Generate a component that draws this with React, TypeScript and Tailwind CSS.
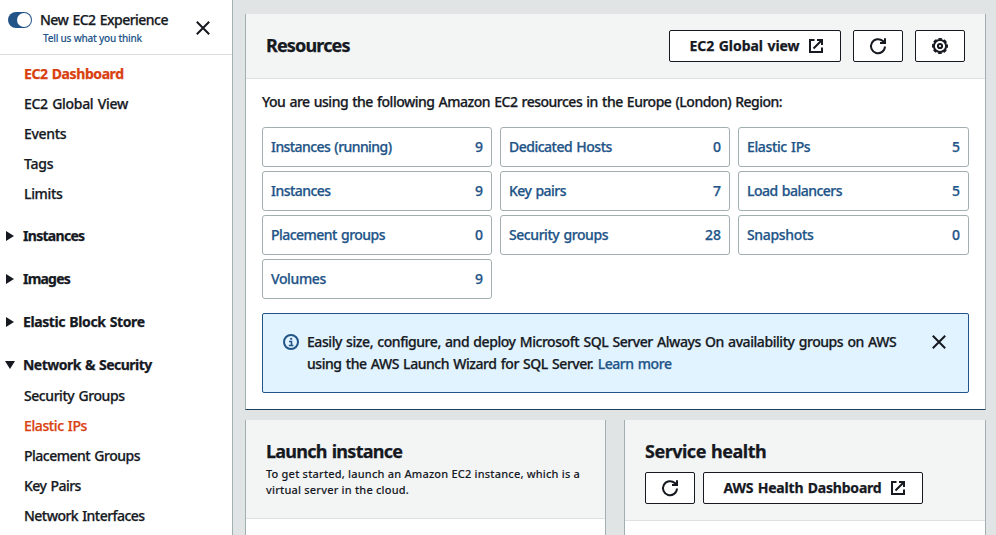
import React from 'react';

const ExternalIcon = () => (
  <svg width="16" height="16" viewBox="0 0 16 16" fill="none" stroke="#16191f" strokeWidth="2" className="shrink-0">
    <path d="M6.5 2H2v12h12V9.5" />
    <path d="M9 2h5v5M14 2L5.500 10.500" />
  </svg>
);

const RefreshIcon = () => (
  <svg width="18" height="18" viewBox="0 0 18 18" fill="none" stroke="#16191f" strokeWidth="2">
    <path d="M16 9.500A7 7 0 1 1 13.800 4.100L15 5.300" />
    <path d="M16 1.200V6h-5" />
    <path d="M13 4l3-1v3z" fill="#16191f" stroke="none" />
  </svg>
);

const GearIcon = () => (
  <svg width="18" height="18" viewBox="0 0 18 18" fill="none" stroke="#16191f">
    <circle cx="9" cy="9" r="6.1" strokeWidth="2" />
    <circle cx="9" cy="9" r="7.2" strokeWidth="1.6" strokeDasharray="3.655 2" strokeDashoffset="1.83" />
    <circle cx="9" cy="9" r="2.100" strokeWidth="2" />
  </svg>
);

const CloseIcon = () => (
  <svg width="14" height="14" viewBox="0 0 14 14" fill="none" stroke="#16191f" strokeWidth="2">
    <path d="M.8.8l12.4 12.4M13.2.8L.8 13.2" />
  </svg>
);

const InfoIcon = () => (
  <svg width="16" height="16" viewBox="0 0 16 16" fill="none" stroke="#225488" className="shrink-0">
    <circle cx="8" cy="8" r="7" strokeWidth="2" />
    <path d="M6 7.500h2.500V11.500M5.800 11.500h4.600" strokeWidth="1.600" />
    <path d="M7.200 4.800h2" strokeWidth="1.800" />
  </svg>
);

const button = 'flex h-8 items-center justify-center rounded-[2px] border border-[#16191f] bg-white font-bold';

const tiles = [
  ['Instances (running)', '9', 'tracking-[-0.57px]'],
  ['Dedicated Hosts', '0', 'tracking-[-0.5px]'],
  ['Elastic IPs', '5', 'tracking-[-0.37px]'],
  ['Instances', '9', 'tracking-[-0.55px]'],
  ['Key pairs', '7', 'tracking-[-0.54px]'],
  ['Load balancers', '5', 'tracking-[-0.52px]'],
  ['Placement groups', '0', 'tracking-[-0.53px]'],
  ['Security groups', '28', 'tracking-[-0.44px]'],
  ['Snapshots', '0', 'tracking-[-0.33px]'],
  ['Volumes', '9', 'tracking-[-0.38px]'],
];

function NavItem({ children, className = '' }: { children: React.ReactNode; className?: string }) {
  return <li className={`flex h-[30px] items-center pl-6 ${className}`}>{children}</li>;
}

function Section({ children, open = false, className }: { children: React.ReactNode; open?: boolean; className: string }) {
  return (
    <div className={`flex h-[43px] items-center pl-[5px] font-bold ${className}`}>
      <svg width="10" height="10" viewBox="0 0 10 10" fill="#16191f" className="mr-2">
        <path d={open ? 'M0 1h10L5 9z' : 'M1 0l8 5-8 5z'} />
      </svg>
      {children}
    </div>
  );
}

export default function App() {
  return (
    <div className="flex h-[535px] w-[996px] overflow-hidden bg-[#e0e4e5] font-['Noto_Sans',sans-serif] text-[14px] leading-[22px] font-medium whitespace-nowrap text-[#16191f] [-webkit-text-stroke:0.25px] [word-spacing:1px]">
      <aside className="w-[233px] shrink-0 border-r border-[#a2afb1] bg-white">
        <div className="flex h-[55px] border-b border-[#d9dddd]">
          <div className="mt-3 ml-2 flex h-4 w-6 justify-end rounded-full bg-[#225488] p-px">
            <div className="size-[14px] rounded-full bg-white" />
          </div>
          <div className="ml-2 w-[156px] pt-[9px]">
            <div className="tracking-[-0.53px]">New EC2 Experience</div>
            <div className="pl-[3px] text-[10px] leading-[14px] tracking-[-0.22px] text-[#225488] [-webkit-text-stroke:0.1px] [word-spacing:0px]">Tell us what you think</div>
          </div>
          <div className="mt-[21px]"><CloseIcon /></div>
        </div>
        <ul className="pt-1">
          <NavItem className="font-bold tracking-[-0.42px] text-[#d9400f]">EC2 Dashboard</NavItem>
          <NavItem className="tracking-[-0.3px]">EC2 Global View</NavItem>
          <NavItem className="tracking-[-0.33px]">Events</NavItem>
          <NavItem className="tracking-[-0.25px]">Tags</NavItem>
          <NavItem className="tracking-[-0.33px]">Limits</NavItem>
        </ul>
        <div className="pt-[5px]">
          <Section className="tracking-[-0.7px]">Instances</Section>
          <Section className="tracking-[-0.8px]">Images</Section>
          <Section className="tracking-[-0.4px]">Elastic Block Store</Section>
          <Section open className="tracking-[-0.53px]">Network &amp; Security</Section>
        </div>
        <ul className="-mt-[5px]">
          <NavItem className="tracking-[-0.44px]">Security Groups</NavItem>
          <NavItem className="tracking-[-0.4px] text-[#d9400f]">Elastic IPs</NavItem>
          <NavItem className="tracking-[-0.5px]">Placement Groups</NavItem>
          <NavItem className="tracking-[-0.54px]">Key Pairs</NavItem>
          <NavItem className="tracking-[-0.54px]">Network Interfaces</NavItem>
        </ul>
      </aside>
      <main className="ml-3 w-[741px] shrink-0 pt-[14px]">
        <section className="h-[396px] border-x border-b border-x-[#a2afb1] border-b-[#203f5c] bg-white">
          <header className="flex h-[65px] items-center border-b border-[#dde1e1] bg-[#f3f5f5] pr-5 pl-5">
            <h2 className="mr-auto pb-0.5 text-[18px] font-bold tracking-[-0.85px]">Resources</h2>
            <div className={`${button} w-[172px] gap-2 pl-[3px]`}><span className="tracking-[-0.05px]">EC2 Global view</span><ExternalIcon /></div>
            <div className={`${button} ml-3 w-[50px]`}><RefreshIcon /></div>
            <div className={`${button} ml-3 w-[50px]`}><GearIcon /></div>
          </header>
          <div className="pt-3 pr-4 pl-4">
            <p className="tracking-[-0.5px]">You are using the following Amazon EC2 resources in the Europe (London) Region:</p>
            <div className="mt-[14px] grid grid-cols-[230px_230px_231px] gap-x-2 gap-y-1">
              {tiles.map(([name, count, tracking]) => (
                <div key={name} className="flex h-10 items-center justify-between rounded-[3px] border border-[#a2afb1] px-2 text-[#225488]">
                  <span className={tracking}>{name}</span>
                  <span>{count}</span>
                </div>
              ))}
            </div>
            <div className="mt-[14px] flex h-20 rounded-[2px] border border-[#225488] bg-[#e1f3fe] pt-[17px] pl-5">
              <div className="mt-[3px]"><InfoIcon /></div>
              <div className="ml-2 w-[625px]">
                <p className="tracking-[-0.44px]">Easily size, configure, and deploy Microsoft SQL Server Always On availability groups on AWS</p>
                <p className="tracking-[-0.45px]">using the AWS Launch Wizard for SQL Server. <a className="text-[#225488]">Learn more</a></p>
              </div>
              <div className="mt-1"><CloseIcon /></div>
            </div>
          </div>
        </section>
        <div className="mt-[10px] flex justify-between">
          <section className="h-[115px] w-[361px] border-x border-[#a2afb1] bg-white">
            <header className="h-[99px] border-b border-[#dde1e1] bg-[#f3f5f5] pt-[19px] pl-5">
              <h2 className="text-[18px] leading-6 font-bold tracking-[-0.74px]">Launch instance</h2>
              <p className="mt-[3px] text-[11px] leading-4 tracking-[0.2px] [-webkit-text-stroke:0.1px] [word-spacing:0px]">To get started, launch an Amazon EC2 instance, which is a<br />virtual server in the cloud.</p>
            </header>
          </section>
          <section className="h-[115px] w-[362px] border-x border-[#a2afb1] bg-white">
            <header className="h-[101px] border-b border-[#dde1e1] bg-[#f3f5f5] pt-[19px] pl-5">
              <h2 className="text-[18px] leading-6 font-bold tracking-[-0.5px]">Service health</h2>
              <div className="mt-[9px] flex gap-2">
                <div className={`${button} w-[50px]`}><RefreshIcon /></div>
                <div className={`${button} w-[220px] gap-2 pl-[3px]`}><span className="tracking-[-0.2px]">AWS Health Dashboard</span><ExternalIcon /></div>
              </div>
            </header>
          </section>
        </div>
      </main>
    </div>
  );
}
